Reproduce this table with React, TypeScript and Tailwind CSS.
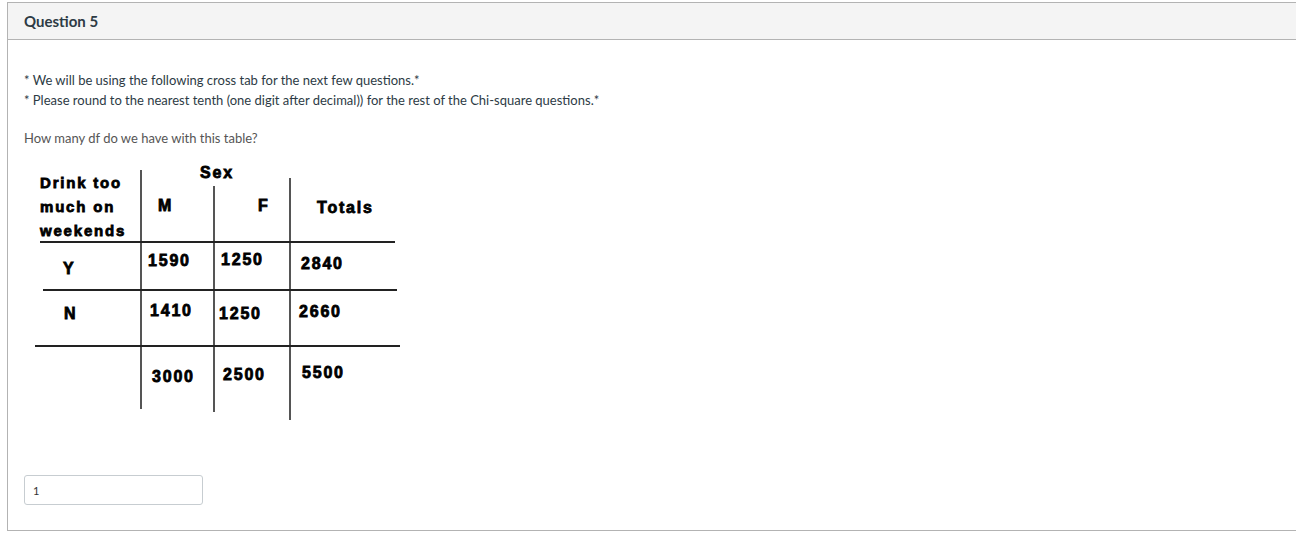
const heavy =
  "absolute whitespace-nowrap font-['Liberation_Sans',Arial,sans-serif] font-bold text-[16px] leading-none tracking-[1.8px] text-black [-webkit-text-stroke:0.8px_black]";

const cells = [
  { t: "Sex", x: 176, y: 10 },
  { t: "M", x: 134, y: 43 },
  { t: "F", x: 234, y: 43 },
  { t: "Totals", x: 293, y: 45 },
  { t: "Y", x: 39, y: 106 },
  { t: "1590", x: 124, y: 98 },
  { t: "1250", x: 197, y: 97 },
  { t: "2840", x: 277, y: 101 },
  { t: "N", x: 40, y: 151 },
  { t: "1410", x: 126, y: 148 },
  { t: "1250", x: 195, y: 151 },
  { t: "2660", x: 275, y: 149 },
  { t: "3000", x: 128, y: 214 },
  { t: "2500", x: 199, y: 212 },
  { t: "5500", x: 278, y: 210 },
];

// the cross tab is a scanned picture in the question, so its lines sit where the picture put them
function CrossTab() {
  return (
    <div className="relative mt-[7px] h-[265px] w-[380px]">
      <div className="absolute left-[116px] top-[15px] h-[239px] w-[1.5px] bg-[#555]" />
      <div className="absolute left-[189px] top-[31px] h-[226px] w-[1.5px] bg-[#555]" />
      <div className="absolute left-[265px] top-[23px] h-[242px] w-[1.5px] bg-[#555]" />
      <div className="absolute left-[16px] top-[86px] h-[1.5px] w-[355px] bg-[#222]" />
      <div className="absolute left-[19px] top-[134px] h-[1.5px] w-[354px] bg-[#222]" />
      <div className="absolute left-[11px] top-[190px] h-[1.5px] w-[365px] bg-[#222]" />

      <div className="absolute left-[16px] top-[16px] whitespace-nowrap font-['Liberation_Sans',Arial,sans-serif] font-bold text-[15px] leading-[24px] tracking-[1.8px] text-black [-webkit-text-stroke:0.8px_black]">
        <div>Drink too</div>
        <div>much on</div>
        <div>weekends</div>
      </div>

      {cells.map((c, i) => (
        <div key={i} className={heavy} style={{ left: c.x, top: c.y }}>
          {c.t}
        </div>
      ))}
    </div>
  );
}

export default function App() {
  return (
    <div className="min-h-[551px] w-full overflow-hidden bg-white pt-[2px] font-['Lato','Noto_Sans',sans-serif]">
      <div className="ml-[7px] w-[1300px] border border-[#b3b3b3]">
        {/* header */}
        <div className="flex h-[37px] items-center border-b border-[#b3b3b3] bg-[#f4f4f4] px-4">
          <h2 className="text-[15px] font-bold text-[#2d3b45]">Question 5</h2>
        </div>

        {/* body */}
        <div className="px-4 pb-[25px] pt-[30px]">
          <div className="text-[13px] leading-[20px] text-[#2d3b45]">
            <p>* We will be using the following cross tab for the next few questions.*</p>
            <p>* Please round to the nearest tenth (one digit after decimal)) for the rest of the Chi-square questions.*</p>
          </div>
          <p className="mt-[18px] text-[13px] leading-[20px] text-[#555]">How many df do we have with this table?</p>

          <CrossTab />

          <input
            readOnly
            value="1"
            className="mt-[55px] h-[30px] w-[179px] rounded-[3px] border border-[#c7cdd1] px-2 text-[11px] text-[#333] outline-none"
          />
        </div>
      </div>
    </div>
  );
}
